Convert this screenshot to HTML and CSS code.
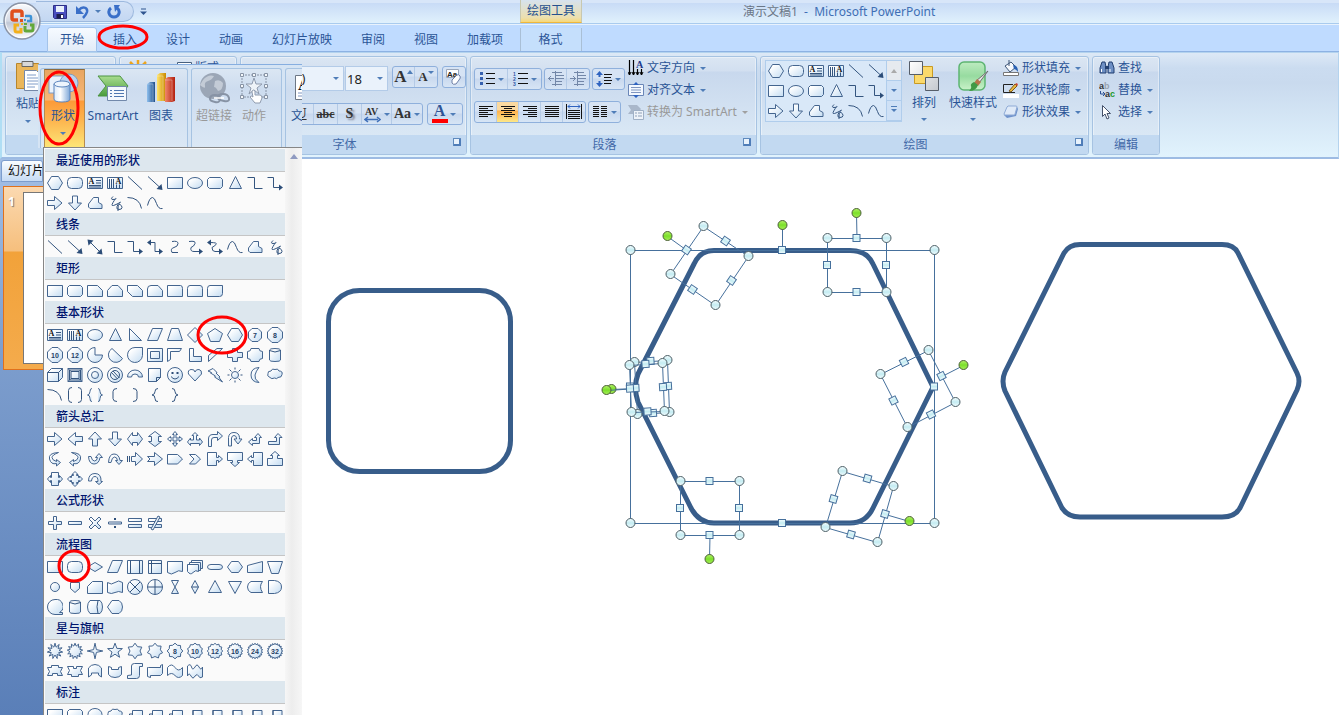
FILE: index.html
```html
<!DOCTYPE html>
<html lang="zh-CN">
<head>
<meta charset="utf-8">
<title>演示文稿1 - Microsoft PowerPoint</title>
<link rel="stylesheet" href="styles.css">
</head>
<body>
<svg class="defs" aria-hidden="true">
  <defs>
    <linearGradient id="gFill" x1="0" y1="0" x2="1" y2="1"><stop offset="0.2" stop-color="#fff"/><stop offset="1" stop-color="#c3dcf2"/></linearGradient>
    <linearGradient id="gKnob" x1="0" y1="0" x2="0" y2="1"><stop offset="0" stop-color="#f4fdff"/><stop offset="0.5" stop-color="#c4ecf2"/><stop offset="1" stop-color="#f0fbfd"/></linearGradient>
    <linearGradient id="gGreen" x1="0" y1="0" x2="0" y2="1"><stop offset="0" stop-color="#b4f06a"/><stop offset="0.5" stop-color="#7be02a"/><stop offset="1" stop-color="#a6ee58"/></linearGradient>
    <linearGradient id="gOrb" x1="0" y1="0" x2="0" y2="1"><stop offset="0" stop-color="#fbfcfe"/><stop offset="0.5" stop-color="#d3d9e4"/><stop offset="0.55" stop-color="#bfc7d5"/><stop offset="1" stop-color="#fff"/></linearGradient>
    <linearGradient id="gBlue" x1="0" y1="0" x2="1" y2="0"><stop offset="0" stop-color="#8fc0ee"/><stop offset="1" stop-color="#1f4f8c"/></linearGradient>
    <linearGradient id="gGold" x1="0" y1="0" x2="1" y2="0"><stop offset="0" stop-color="#ffe36b"/><stop offset="1" stop-color="#c98a00"/></linearGradient>
    <linearGradient id="gRed" x1="0" y1="0" x2="1" y2="0"><stop offset="0" stop-color="#f0876a"/><stop offset="1" stop-color="#b32010"/></linearGradient>
    <linearGradient id="gLeaf" x1="0" y1="0" x2="0" y2="1"><stop offset="0" stop-color="#a9dd8f"/><stop offset="1" stop-color="#4a9c3c"/></linearGradient>
    <linearGradient id="gCyl" x1="0" y1="0" x2="1" y2="0"><stop offset="0" stop-color="#dceafa"/><stop offset="0.4" stop-color="#fff"/><stop offset="1" stop-color="#7da6d8"/></linearGradient>
    <linearGradient id="gPlate" x1="0" y1="0" x2="1" y2="1"><stop offset="0" stop-color="#fff"/><stop offset="1" stop-color="#c4c8ce"/></linearGradient>
    <linearGradient id="gStyle" x1="0" y1="0" x2="0" y2="1"><stop offset="0" stop-color="#bdebc0"/><stop offset="0.5" stop-color="#97dba0"/><stop offset="1" stop-color="#c9f2c9"/></linearGradient>
  </defs>
</svg>

<header class="titlebar">
  <div class="quick">
    <button class="plain" aria-label="保存"><svg width="14" height="14" viewBox="0 0 14 14"><path d="M.5 .5h13v13h-12l-1-1z" fill="#4a4fc0" stroke="#2c2f86"/><path d="M3 1h8v6H3z" fill="#e8f0fb"/><path d="M3.500 9h7v4.500h-7z" fill="#1d1f4e"/><path d="M8 10h2v3H8z" fill="#fff"/></svg></button>
    <button class="plain" aria-label="撤消"><svg width="14" height="14" viewBox="0 0 14 14"><path d="M4 5c3-4 9-3 8 2-.5 2-2 4-4 6" fill="none" stroke="#3a6fc8" stroke-width="2.500"/><path d="M1 1v8h8z" fill="#3a6fc8"/></svg></button>
    <span class="caret"></span>
    <button class="plain" aria-label="重复"><svg width="14" height="14" viewBox="0 0 14 14"><path d="M4 3C0 6 2 12 7 12s7-6 3-9" fill="none" stroke="#3a6fc8" stroke-width="3"/><path d="M7 0h6l-5 7z" fill="#3a6fc8"/></svg></button>
  </div>
  <button class="plain customize" aria-label="自定义快速访问工具栏"><svg width="7" height="8" viewBox="0 0 7 8"><path d="M1 1h5" stroke="#2f558f"/><path d="M0 3.500h7L3.500 7z" fill="#2f558f"/></svg></button>
  <div class="context-title">绘图工具</div>
  <h1 class="doc-title"><span>演示文稿1</span>&nbsp; - &nbsp;Microsoft PowerPoint</h1>
</header>

<button class="orb" aria-label="Office 按钮">
  <svg width="40" height="40" viewBox="0 0 40 40">
    <circle cx="20" cy="20" r="18" fill="url(#gOrb)" stroke="#8a94a6" stroke-width="1.500"/>
    <circle cx="20" cy="20" r="16.500" fill="none" stroke="#fff" opacity=".8"/>
    <g fill="none" stroke-width="3">
      <path d="M16 19h-4q-2 0-2-2v-5q0-2 2-2h6q2 0 2 2v4" stroke="#e0501e" stroke-width="3.500"/>
      <path d="M23 15h5q1 0 1 1v4h-4" stroke="#3f93d6" stroke-width="2.500"/>
      <path d="M17 24h-4v5q0 2 2 2h4v-4" stroke="#f3b01c"/>
      <path d="M23 25v4q0 1 1 1h5q2 0 2-2v-4h-3" stroke="#63a83a"/>
    </g>
    <path d="M18 18h3v3h-3z" fill="#e0501e"/><path d="M22 18h2v2h-2z" fill="#3f93d6"/><path d="M19 22h2v2h-2z" fill="#f3b01c"/><path d="M22 22h3v2h-3z" fill="#63a83a"/>
  </svg>
</button>

<nav class="tabs">
  <button class="tab active">开始</button><button class="tab">插入</button><button class="tab">设计</button><button class="tab">动画</button><button class="tab">幻灯片放映</button><button class="tab">审阅</button><button class="tab">视图</button><button class="tab">加载项</button><button class="tab context">格式</button>
</nav>

<section class="ribbon">
  <div class="group g-clip">
    <div class="body">
      <button class="big paste"><svg width="26" height="32" viewBox="0 0 26 32"><path d="M1.500 3.500h22v25h-22z" fill="#eab65a" stroke="#b8862c"/><path d="M7 1.500h11v5H7z" fill="#d8d8d8" stroke="#666"/><path d="M9.500 10.500h12l4 4v16h-16z" fill="#fff" stroke="#7488a8"/><path d="M12 15h9M12 18h11M12 21h11M12 24h11M12 27h8" stroke="#7f9cc8"/></svg>粘贴<span class="caret"></span></button>
      <button class="row cut"><svg width="12" height="14" viewBox="0 0 12 14"><path d="M2 1l6 9M10 1L4 10" stroke="#555" stroke-width="1.500"/></svg>剪切</button>
    </div>
    <div class="label">剪贴板</div>
  </div>
  <div class="group g-slides">
    <div class="body">
      <svg width="26" height="26" viewBox="0 0 26 26"><path d="M13 3v12M5 5l8 8 8-8" stroke="#eda51c" stroke-width="2.500" fill="none"/></svg>
      <button class="row"><svg width="15" height="14" viewBox="0 0 15 14"><path d="M.5 1.500h14v12H.5z" fill="#fff" stroke="#47607e"/><path d="M3 4h9" stroke="#47607e"/></svg>版式</button>
    </div>
    <div class="label">幻灯片</div>
  </div>
  <div class="group g-font">
    <div class="body rows">
      <div class="line">
        <div class="combo name"><input aria-label="字体" value="宋体 (正文)"><span class="caret"></span></div>
        <div class="combo size"><input aria-label="字号" value="18"><span class="caret"></span></div>
        <div class="btns"><button class="serif s16" aria-label="增大字体">A<i class="tri up"></i></button><button class="serif s13" aria-label="缩小字体">A<i class="tri"></i></button></div>
        <div class="btns"><button aria-label="清除格式"><svg width="18" height="18" viewBox="0 0 18 18"><path d="M1.500 1.500h12v8h-12z" fill="#fff" stroke="#9aa6ba"/><text x="2" y="9" class="t-aa">Aa</text><path d="M7 12l5-5q2-1 3 1t-1 4l-3 4q-3 1-4-1z" fill="#fff" stroke="#6d7fa6"/></svg></button></div>
      </div>
      <div class="line">
        <div class="btns fmt"><button class="serif">B</button><button class="serif"><i>I</i></button><button class="serif"><u>U</u></button><button class="serif strike">abc</button><button class="serif shadow">S</button><button class="serif av"><svg width="17" height="17" viewBox="0 0 17 17"><text x="1" y="9" class="t-av">AV</text><path d="M2 13.500h12M4 11l-3 2.500L4 16M13 11l3 2.500-3 2.500" fill="none" stroke="#3f6fb8" stroke-width="1.500"/></svg><span class="caret"></span></button><button class="serif">Aa<span class="caret"></span></button></div>
        <div class="btns"><button class="serif color">A<span class="caret"></span></button></div>
      </div>
    </div>
    <div class="label launch">字体<i class="launcher"></i></div>
  </div>
  <div class="group g-para">
    <div class="body">
      <div class="rows">
        <div class="line">
          <div class="btns w34"><button aria-label="项目符号" data-icon="bullets"></button><button aria-label="编号" data-icon="numbers"></button></div>
          <div class="btns w22 off"><button aria-label="减少缩进" data-icon="outdent"></button><button aria-label="增加缩进" data-icon="indent"></button></div>
          <div class="btns w32"><button aria-label="行距" data-icon="spacing"></button></div>
        </div>
        <div class="line">
          <div class="btns w23"><button aria-label="左对齐" data-icon="aleft"></button><button class="on" aria-label="居中" data-icon="acenter"></button><button aria-label="右对齐" data-icon="aright"></button><button aria-label="两端对齐" data-icon="ajust"></button><button aria-label="分散对齐" data-icon="adist"></button></div>
          <div class="btns w32"><button aria-label="分栏" data-icon="columns"></button></div>
        </div>
      </div>
      <div class="stack">
        <button class="row"><svg width="16" height="16" viewBox="0 0 16 16"><path d="M1.500 0v15M5.500 0v15M9.500 9v6M13.500 9v6" stroke="#000" stroke-width="1.200"/><path d="M0 12l1.500 3L3 12M4 12l1.500 3L7 12M8 12l1.500 3 1.500-3M12 12l1.500 3 1.500-3" fill="none" stroke="#000"/><text x="8" y="8" class="t-a">A</text></svg>文字方向<span class="caret"></span></button>
        <button class="row"><svg width="16" height="16" viewBox="0 0 16 16"><path d="M.5 2.500h15v11H.5z" fill="#f3f8ff" stroke="#6a86b8"/><path d="M3 5.500h10M3 8h10M3 10.500h10" stroke="#7f95bf"/><path d="M8 0l3 3H5zM8 16l3-3H5z" fill="#2f63c0"/></svg>对齐文本<span class="caret"></span></button>
        <button class="row off" disabled><svg width="16" height="16" viewBox="0 0 16 16"><path d="M0 1h9l4 4-4 5H0l3-4z" fill="#a9b7ca"/><path d="M5.500 6.500h10v9h-10z" fill="#eef3f9" stroke="#9fb0c6"/><path d="M7 9h2M10 9h4M7 12h2M10 12h4" stroke="#8fa0b8"/></svg>转换为 SmartArt<span class="caret"></span></button>
      </div>
    </div>
    <div class="label launch">段落<i class="launcher"></i></div>
  </div>
  <div class="group g-draw">
    <div class="body">
      <div class="mini">
        <div class="shapes" data-list="hex rrect textbox vtext line arrow rect oval rrect2 tri elbow elbowA rArr dArr freeform scribble arc curve"></div>
        <div class="spin"><button class="dim" aria-label="上一行"><i class="tri up"></i></button><button aria-label="下一行"><i class="tri"></i></button><button aria-label="其他"><i class="tri bar"></i></button></div>
      </div>
      <button class="big arrange"><svg width="32" height="32" viewBox="0 0 32 32"><path d="M6.500 6.500h18v17h-18z" fill="#fbd96b" stroke="#c99a22"/><path d="M1.500 1.500h13v13h-13zM17.500 17.500h13v13h-13z" fill="url(#gPlate)" stroke="#555d69"/></svg>排列<span class="caret"></span></button>
      <button class="big"><svg width="32" height="32" viewBox="0 0 32 32"><rect x="2" y="2" width="26" height="28" rx="5" fill="url(#gStyle)" stroke="#5db472" stroke-width="1.500"/><path d="M31 11l-9 12-3-2z" fill="#e6e6e6" stroke="#6f6f6f"/><path d="M20 19l4 3-3 4-4-3z" fill="#b3754b"/><path d="M17 22l4 3q-2 6-9 6 3-3 2-5t3-4z" fill="#3f9a45"/></svg>快速样式<span class="caret"></span></button>
      <div class="stack">
        <button class="row"><svg width="16" height="16" viewBox="0 0 16 16"><path d="M2 6l6-4 5 5-6 5z" fill="#f6f9fd" stroke="#3e5678"/><path d="M6 0v6" stroke="#3e5678"/><path d="M10 5q5 0 5 7-2-3-4-3z" fill="#2b62b4"/><path d="M.5 12.500h15v3H.5z" fill="#fff" stroke="#777"/></svg>形状填充<span class="caret"></span></button>
        <button class="row"><svg width="16" height="16" viewBox="0 0 16 16"><path d="M12 10.500H.5v-8H10" fill="none" stroke="#222"/><path d="M6 9l6-7 2 2-6 6z" fill="#e9b83e" stroke="#7d5b1d"/><path d="M12 2l2-1 1 2-1 1z" fill="#cc4432"/><path d="M0 12h16v4H0z" fill="#fff"/></svg>形状轮廓<span class="caret"></span></button>
        <button class="row"><svg width="16" height="16" viewBox="0 0 16 16"><path d="M5 3h9l1 2-2 7-9 2-3-3z" fill="#6f93cc"/><path d="M5 2h8q1 0 1 1l-2 7q0 1-1 1H2q-1 0-1-1l3-7z" fill="#dfeaf8" stroke="#8fabd6"/></svg>形状效果<span class="caret"></span></button>
      </div>
    </div>
    <div class="label launch">绘图<i class="launcher"></i></div>
  </div>
  <div class="group g-edit">
    <div class="body">
      <div class="stack">
        <button class="row"><svg width="16" height="16" viewBox="0 0 16 16"><path d="M3 2h3l1 5v6H1V8zM10 2h3l2 6v5H9V7z" fill="#6d8fc4" stroke="#223f70"/><path d="M6 6h4v3H6z" fill="#223f70"/><path d="M2.500 9v3M11 9v3" stroke="#fff"/></svg>查找</button>
        <button class="row"><svg width="16" height="16" viewBox="0 0 16 16"><text x="0" y="7" class="t-ab">a<tspan fill="#9aa3b0">b</tspan></text><text x="6" y="15" class="t-ab">a<tspan fill="#1f9a2c">c</tspan></text><path d="M1.500 9v3h4M4 10l2 2-2 2" fill="none" stroke="#2a4f93"/></svg>替换<span class="caret"></span></button>
        <button class="row"><svg width="16" height="16" viewBox="0 0 16 16"><path d="M3.500 1.500v11l2.500-2.500 2 5 2-1-2-4.500h3.500z" fill="#fff" stroke="#44516a"/></svg>选择<span class="caret"></span></button>
      </div>
    </div>
    <div class="label">编辑</div>
  </div>
</section>

<main class="workspace">
  <aside class="pane">
    <div class="pane-tab">幻灯片</div>
    <div class="thumb"><span>1</span><div class="slide"></div></div>
  </aside>
  <svg class="stage" id="stage"></svg>
</main>

<section class="insert">
  <div class="igroup first">
    <button class="big hot"><svg width="32" height="32" viewBox="0 0 32 32"><rect x="2" y="4" width="17" height="17" fill="#eaf2fc" stroke="#7e9cc8"/><circle cx="22" cy="11" r="9" fill="#bcd3f0" stroke="#7e9cc8"/><path d="M7 12v15q0 3 8 3t8-3V12z" fill="url(#gCyl)" stroke="#5b84bd"/><ellipse cx="15" cy="12" rx="8" ry="3" fill="#eef5fd" stroke="#5b84bd"/></svg>形状<span class="caret"></span></button>
    <button class="big smart"><svg width="32" height="32" viewBox="0 0 32 32"><path d="M1 4h22l8 10-8 10H1l8-10z" fill="url(#gLeaf)" stroke="#4d9443"/><path d="M10.500 14.500h19v14h-19z" fill="#f4f8fd" stroke="#7289ab"/><path d="M13 18.500h2M17 18.500h10M13 21.500h2M17 21.500h10M13 24.500h2M17 24.500h10" stroke="#4f77b0"/></svg>SmartArt</button>
    <button class="big"><svg width="32" height="32" viewBox="0 0 32 32"><path d="M2 12l3-2h5v20H2z" fill="url(#gBlue)"/><path d="M12 3l3-2h6v28h-9z" fill="url(#gGold)"/><path d="M20 7l3-2h7v24l-3 1h-7z" fill="url(#gRed)"/><path d="M2 12h6v18M12 4h6v25M20 8h7v21" fill="none" stroke="#fff" opacity=".3"/></svg>图表</button>
  </div>
  <div class="igroup off second">
    <button class="big" disabled><svg width="32" height="32" viewBox="0 0 32 32"><circle cx="15" cy="14" r="13" fill="#9ba6b6"/><path d="M5 8q5-6 11-4-2 4-6 5t-3 5-5-1zM17 9q5-2 8 2 0 7-5 8-2-4-4-4z" fill="#c3cbd6"/><path d="M12 27q0-4 5-4t5 4-5 3-5-3zM20 26q0-4 5-4t6 4-5 3-6-3z" fill="none" stroke="#8793a5" stroke-width="2"/><path d="M16 26h10" stroke="#fff" stroke-width="1.500"/></svg>超链接</button>
    <button class="big" disabled><svg width="32" height="32" viewBox="0 0 32 32"><path d="M4 3h24v22H4z" fill="none" stroke="#8793a5" stroke-dasharray="2 1"/><path d="M16 6l2 6h6l-5 4 2 6-5-4-5 4 2-6-5-4h6z" fill="#eef3f8" stroke="#8f9bae"/><path d="M2.500 1.500h3v3h-3zM14.500 1.500h3v3h-3zM26.500 1.500h3v3h-3zM2.500 12.500h3v3h-3zM26.500 12.500h3v3h-3zM2.500 23.500h3v3h-3zM26.500 23.500h3v3h-3z" fill="#f4f7fa" stroke="#8793a5"/><path d="M14 20v-1q2-2 3 0v4h5q2 0 2 3l-2 5h-5l-5-6q1-2 3 0z" fill="#fff" stroke="#8f9bae"/></svg>动作</button>
  </div>
  <div class="igroup third">
    <button class="big"><svg width="32" height="32" viewBox="0 0 32 32"><path d="M2.500 3.500h28v24h-28z" fill="#fff" stroke="#6d7785"/><text x="5" y="18" class="t-box">A</text><path d="M5 21h20M5 24h20" stroke="#7f95bf"/></svg>文本框</button>
  </div>
</section>

<section class="menu">
  <div class="menu-list" id="menu"></div>
  <div class="scroll"><i class="tri up"></i></div>
</section>

<svg class="marks" aria-hidden="true">
  <ellipse cx="123" cy="37" rx="24" ry="11"/>
  <ellipse cx="59" cy="108" rx="19" ry="36"/>
  <ellipse cx="222" cy="335" rx="24" ry="18"/>
  <circle cx="74" cy="566" r="15"/>
</svg>
<script src="script.js"></script>
</body>
</html>
```
FILE: styles.css
```css
* { box-sizing: border-box; }
html, body { height: 100%; }
body {
  margin: 0; display: flex; flex-direction: column; overflow: hidden; position: relative;
  font: 12px/16px "Noto Sans", "Noto Sans CJK SC", sans-serif; color: #2a5496; background: #bfdbff;
}
button { font: inherit; color: inherit; background: none; border: 0; padding: 0; margin: 0; white-space: nowrap; }
svg { display: block; flex: none; }
.defs { position: absolute; width: 0; height: 0; }
.plain { display: flex; align-items: center; }

.caret, .tri { display: block; flex: none; width: 0; height: 0; border: 3px solid transparent; border-top-color: #4f7db8; border-bottom: 0; }
.tri.up { border-top: 0; border-bottom: 4px solid #4f7db8; }
.off .caret { border-top-color: #a0a0a0; }

.titlebar {
  flex: none; height: 24px; display: flex; align-items: stretch; padding-left: 36px;
  background: linear-gradient(#d8e6f9 0 3px, #c8dbf6 3px, #dff0fc 22px); border-bottom: 1px solid #a9cbee;
}
.quick {
  display: flex; align-items: center; gap: 8px; width: 98px; padding-left: 17px; margin: 1px 0 1px;
  background: linear-gradient(#d3e2f6, #c3d7f2); border: 1px solid #9db9de; border-left: 0; border-radius: 0 11px 11px 0;
}
.quick .caret { margin: 0 -2px; }
.customize { margin-left: 6px; }
.context-title {
  margin-left: 373px; width: 62px; text-align: center; line-height: 22px; color: #25508f;
  background: linear-gradient(#d6e2ee, #ecdfae 80%, #f7d878); border: solid #c8c8b0; border-width: 0 1px; border-bottom: 1px solid #efb73c;
}
.doc-title { margin: 0 0 0 161px; font-size: 12px; font-weight: 400; line-height: 24px; color: #3f6fb5; white-space: nowrap; }
.doc-title span { color: #6b7787; }

.orb { position: absolute; left: 2px; top: 1px; z-index: 3; border-radius: 50%; }

.tabs { flex: none; height: 28px; display: flex; align-items: stretch; gap: 5px; padding: 3px 0 0 48px; border-top: 1px solid #e8f2fd; background: #bfdbff; border-bottom: 1px solid #8db2e3; }
.tab { padding: 0 12px; line-height: 22px; }
.tab.active { background: linear-gradient(#f6faff, #e2ecf8); border-radius: 3px 3px 0 0; box-shadow: 0 0 0 1px #a3c3ea, 0 1px 0 1px #e2ecf8; }
.tab.context { width: 62px; padding: 0 11px 0 10px; border: solid #a9bfd6; border-width: 0 1px; background: #c5dffc; }

.ribbon {
  flex: none; display: flex; gap: 3px; padding: 3px 5px 2px 3px; height: 107px;
  background: linear-gradient(#dde9f6, #cbdcf0 15px, #c9daee 30px, #e1f3fd); border: 1px solid #b4d3ee; border-left: 2px solid #b0def4; border-bottom: 2px solid #9dbbe3;
}
.group {
  flex: none; display: flex; flex-direction: column; border: 1px solid #a6c3e2; border-radius: 3px; overflow: hidden; box-shadow: inset 0 0 0 1px rgba(255,255,255,.4);
  background: linear-gradient(#dbe6f3, #d2dff0 14px, #c8d8ed 15px, #dae8f5 80px);
}
.body { flex: 1; min-height: 0; display: flex; align-items: flex-start; }
.label { flex: none; height: 19px; line-height: 19px; text-align: center; background: #c2d9f1; color: #4369a8; }
.label.launch { display: flex; align-items: center; justify-content: center; position: relative; padding-right: 18px; }
.launcher { position: absolute; right: 5px; top: 3px; width: 8px; height: 8px; border: solid #5f8abd; border-width: 1px 0 0 1px; }
.launcher::after { content: ""; position: absolute; right: 0; bottom: 0; width: 5px; height: 5px; border: solid #4f7db8; border-width: 0 2px 2px 0; background: #e8f2fc; }
.g-clip { width: 111px; }
.g-slides { width: 118px; }
.g-font { width: 227px; }
.g-para { width: 287px; }
.g-draw { width: 329px; }
.g-edit { width: 68px; }

.big { display: flex; flex-direction: column; align-items: center; }
.big .caret { margin-top: 8px; }
.big svg { margin-bottom: 4px; }
.row { display: flex; align-items: center; gap: 3px; height: 22px; }
.row .caret { margin-left: 2px; }
.off, .off button { color: #999; }

.g-clip .body { padding: 3px 9px; gap: 18px; }
.g-clip .big svg { margin-bottom: 4px; }
.g-clip .row { gap: 6px; }
.g-slides .body { padding: 0 5px; gap: 26px; }

.rows { display: flex; flex-direction: column; gap: 13px; }
.line { display: flex; gap: 4px; }
.g-font .rows { padding: 9px 4px 0; gap: 12px; }
.combo { display: flex; align-items: center; height: 25px; background: #eaf2fb; border: 1px solid #b3cbe8; padding-right: 4px; }
.combo input { min-width: 0; flex: 1; border: 0; padding: 0 0 0 1px; background: none; font: inherit; color: #222; }
.combo.name { width: 99px; margin-right: -3px; }
.combo.size { width: 43px; font-size: 13px; }
.btns { display: flex; height: 22px; border: 1px solid #8fb0dc; border-radius: 3px; background: linear-gradient(#d6e3f4 45%, #c8d8ee 50%, #d7e5f5); }
.btns button { display: flex; align-items: center; justify-content: center; gap: 3px; min-width: 22px; border-right: 1px solid #b4cae6; }
.btns button:last-child { border-right: 0; }
.serif { font-family: "Liberation Serif", serif; font-weight: 700; color: #333; font-size: 14px; }
.serif.s16 { font-size: 17px; }
.serif.s13 { font-size: 13px; }
.btns .s16, .btns .s13 { gap: 0; }
.s16 .tri, .s13 .tri { margin-bottom: 10px; }
.fmt button:nth-child(n+3) { min-width: 24px; }
.fmt button:nth-child(n+6) { min-width: 30px; }
.serif.strike { text-decoration: line-through; font-size: 12px; }
.shadow { text-shadow: 2px 2px 2px #778; }
.btns .color { width: 34px; font-size: 16px; color: #2f5496; line-height: 14px; align-items: flex-start; background: linear-gradient(#f00, #f00) 4px 15px / 16px 4px no-repeat; }
.btns .color .caret { margin-top: 9px; margin-left: 2px; }

.g-para .body { padding: 0 3px; gap: 3px; }
.g-para .rows { padding-top: 11px; gap: 11px; }
.g-para .line { gap: 2px; }
.w34 button { width: 33px; }
.w32 button { width: 31px; }
.btns .on { background: linear-gradient(#fbd9a0 40%, #fdb14e 45%, #fde788); }
.stack { display: flex; flex-direction: column; }

.g-draw .body { padding: 3px 4px; }
.mini { display: flex; border: 1px solid #b0cdec; background: #d9e8f8; margin-right: 6px; }
.shapes { display: grid; grid-template-columns: repeat(12, 20px); grid-auto-rows: 20px; }
.cell { display: flex; align-items: center; justify-content: center; }
.mini .shapes { grid-template-columns: repeat(6, 20px); }
.mini .cell { width: 20px; height: 20px; }
.spin { display: flex; flex-direction: column; width: 15px; border-left: 1px solid #b0cdec; }
.spin button { flex: 1; display: flex; align-items: center; justify-content: center; border-bottom: 1px solid #b0cdec; background: #cfe1f6; }
.spin .dim { background: #e6eaef; }
.spin .dim .tri { border-bottom-color: #aaa; }
.tri.bar { position: relative; }
.tri.bar::before { content: ""; position: absolute; left: -3px; top: -6px; width: 6px; height: 1px; background: #4f7db8; }
.g-draw .arrange { margin-right: 9px; }
.g-draw .big .caret { margin-top: 7px; }
.g-draw .big svg { margin-bottom: 3px; }
.g-draw .body > .stack { margin: -3px 0 0 6px; }
.g-edit .body { padding-left: 6px; }

.workspace { flex: 1; min-height: 0; display: flex; }
.pane { flex: none; width: 43px; padding: 1px 0 0 1px; background: linear-gradient(#a3bfe5, #7c9dcd 200px, #5a7fb8); }
.pane-tab { width: 42px; height: 22px; padding-left: 6px; overflow: hidden; white-space: nowrap; line-height: 20px; color: #111; background: linear-gradient(#fafdff, #c6dbf4); border: 1px solid #7c9dcd; border-radius: 3px 3px 0 0; }
.thumb { margin: 4px 0 0 2px; height: 184px; display: flex; align-items: flex-start; gap: 8px; padding: 5px 0 5px 4px; border: 1px solid #e0711c; border-right: 0; background: linear-gradient(#fbd9b0, #f6bf7d 64px, #f2a23a 65px, #f4ab4c); overflow: hidden; }
.thumb span { color: #fff; font-weight: 700; line-height: 20px; text-shadow: 1px 1px 1px #777; }
.slide { flex: 1; height: 172px; background: #fff; border: 1px solid #777; border-right: 0; }
.stage { flex: 1; width: 100%; height: 100%; background: #fff; }
.outline { fill: none; stroke: #385d8a; stroke-width: 5; stroke-linejoin: round; }
.guide { fill: none; stroke: #46709c; stroke-width: 1; }
.knob { fill: url(#gKnob); stroke: #4d5f66; }
.mid { fill: url(#gKnob); stroke: #46709c; }
.green { fill: url(#gGreen); stroke: #4d5f3a; }

.insert { position: absolute; left: 38px; top: 64px; z-index: 5; width: 264px; height: 84px; display: flex; gap: 3px; padding: 3px 0 0 2px; overflow: hidden; background: #d5e4f4; border-top: 1px solid #86aee0; }
.igroup { flex: none; display: flex; align-items: flex-start; border: 1px solid #a6c3e2; border-bottom: 0; border-radius: 3px 3px 0 0; background: linear-gradient(#dbe6f3, #cddcef 20px, #dbe8f5); }
.igroup.off { color: #999; }
.igroup .big { padding-top: 3px; }
.first { width: 148px; padding-left: 3px; gap: 2px; }
.second { width: 91px; padding-left: 4px; gap: 6px; }
.third { width: 50px; padding-left: 5px; }
.igroup .hot { width: 41px; height: 79px; padding: 2px 3px 0 0; border: 1px solid #b58b50; border-top-color: #8d6a3c; background: linear-gradient(#e8a560, #f7b878 30px, #fc9a38 31px, #fdb44e 50px, #fde576); }
.smart { min-width: 52px; }
.igroup .big:nth-child(3) { margin-left: 4px; }

.menu { position: absolute; left: 43px; top: 147px; bottom: 0; z-index: 6; width: 259px; display: flex; overflow: hidden; background: #fafafa; border: 1px solid #868686; border-width: 1px 0 0 1px; }
.menu-list { flex: none; width: 241px; padding: 1px 0 0 1px; overflow: hidden; }
.menu h2 { margin: 0; height: 23px; padding-left: 11px; font-size: 12px; line-height: 23px; font-weight: 500; color: #00156e; background: #dde7ee; border-bottom: 1px solid #c5c5c5; }
.menu .shapes { padding-top: 1px; }
.scroll { flex: 1; padding: 6px 0 0 5px; background: linear-gradient(90deg, #f6f6f6, #ededed 40%, #f6f6f6); }
.scroll .tri { border-width: 0 4px 5px; border-bottom-color: #8f9ac0; }

.f { fill: url(#gFill); stroke: #44658f; }
.l { fill: none; stroke: #34557f; }
.d { fill: #2c4d78; stroke: none; }
.k { fill: none; stroke: #111; stroke-width: 1; }
.tn { font: 700 7px/8px "Liberation Sans", sans-serif; text-anchor: middle; fill: #1f3f66; }
.ta { font: 700 8px "Liberation Serif", serif; fill: #111; }
.tb { font: 700 5px "Liberation Sans", sans-serif; fill: #2f55a8; }
.t-aa { font: 700 8px "Liberation Sans", sans-serif; fill: #222; }
.t-av { font: 700 10px "Liberation Serif", serif; fill: #333; }
.t-a { font: 700 10px "Liberation Serif", serif; fill: #1d3a8a; }
.t-ab { font: 700 9px "Liberation Sans", sans-serif; fill: #333; }
.t-box { font: 700 16px "Liberation Serif", serif; fill: #111; }

.marks { position: absolute; left: 0; top: 0; width: 100%; height: 100%; z-index: 10; pointer-events: none; }
.marks * { fill: none; stroke: #f00; stroke-width: 3; }
```
FILE: script.js
```javascript
// Shape glyphs on a 16x16 grid. Parts are split by "|"; the first letter picks
// the style: F filled outline, L thin line, D solid dark, T centred number.
const G = {
  hex: 'FM4.5 1.5h7l4 6.500-4 6.500h-7L.5 8z',
  rrect: 'FM4.5 2.500h7q4 0 4 4v3q0 4-4 4h-7q-4 0-4-4v-3q0-4 4-4z',
  rrect2: 'FM2.500 2.500h11l2 2v7l-2 2h-11l-2-2v-7z',
  textbox: 'FM.5 2.500h15v11H.5z|LM9 5.500h5M9 8h5M2 10.500h12M2 12h12|A1.500,9',
  vtext: 'FM.5 2.500h15v11H.5z|LM2.500 4v9M4.500 4v9M6.500 4v9M9.500 9.500v4M12.500 9.500v4|A8.500,9',
  line: 'LM1 1.500L15 14.500', arrow: 'LM1 1.500L13 12.500|DM15.500 15l-6-1 5-5z',
  darrow: 'LM3 3l10 10|DM15.500 15.500l-6-1 5-5zM.5 .5l6 1-5 5z',
  rect: 'FM.5 2.500h15v11H.5z', oval: 'FM8 2.500a7.500 5.500 0 1 1 0 11a7.500 5.500 0 1 1 0-11z',
  tri: 'FM8.500 1.500l6 12h-12z', elbow: 'LM.5 2.500h7v11h8',
  elbowA: 'LM.5 2.500h6v10h7|DM12 9.500l4 3-4 3z', elbowD: 'LM3 3.500h5v9h5|DM4 .5l-4 3 4 3zM12 9.500l4 3-4 3z',
  curved: 'LM5 2.500q6-1 6 2t-4 4-2 5h6', curvedA: 'LM2 2.500q7-1 6 2t-4 4q-1 4 3 4h6|DM12 9.500l4 3-4 3z',
  curvedD: 'LM3 3.500q8 0 6 2t-4 3q0 4 3 4h5|DM4 .5l-4 3 4 3zM12 9.500l4 3-4 3z',
  rArr: 'FM.5 5.500h7v-4L15 8l-7.500 6.500v-4h-7z', lArr: 'FM15.500 5.500h-7v-4L1 8l7.500 6.500v-4h7z',
  uArr: 'FM5.500 15v-7h-4L8 1l6.500 7h-4v7z', dArr: 'FM5.500 1v7h-4L8 15l6.500-7h-4V1z',
  freeform: 'FM1.500 12V9l5-6.500h5v5l3.500 2v4H3z', scribble: 'LM6 1.500q-3 3 0 3t3-1-3 4 3 2 4-2-3 4 2 3 3-2-2-3-2 5 0 3',
  arc: 'LM.5 2.500q12 0 14 11', curve: 'LM.5 10.500q2-8 5-8 2 0 4 6t6 5',
  snip1: 'FM.5 2.500h10l5 5v6H.5z', snip2: 'FM5 2.500h6l4.500 5v6H.5v-6z', snipd: 'FM.5 2.500h10l5 5v6h-10l-5-5z',
  snipr: 'FM4 2.500h7l4.500 5v6H.5V6q0-3.500 3.500-3.500z', round1: 'FM.5 2.500h13q2 0 2 3v8H.5z',
  round2: 'FM3 2.500h10q2.500 0 2.500 3v8H.5v-8q0-3 2.500-3z', roundd: 'FM3 2.500h12.500v8q0 3-3 3H.5v-8q0-3 2.500-3z',
  rtri: 'FM2.500 1.500l12 12h-12z', para: 'FM5.500 1.500h10l-5 12H.5z', trap: 'FM4.500 1.500h7l4 12H.5z',
  diamond: 'FM8 .5L15.500 8 8 15.500.5 8z', pentagon: 'FM8 1.500l7.500 5-3 8h-9l-3-8z',
  n7: 'FM5 1.500h6l3.500 3.500v6L11 14.500H5L1.500 11V5z|T7', n8: 'FM5 .5h6l4.500 4.500v6L11 15.500H5L.5 11V5z|T8',
  n10: 'FM5 .5h6l4.500 4.500v6L11 15.500H5L.5 11V5z|T10', n12: 'FM5 .5h6l4.500 4.500v6L11 15.500H5L.5 11V5z|T12',
  pie: 'FM8 8h7.500A7.500 7.500 0 1 1 8 .5z', chord: 'FM5 1.500l10.500 10a7.500 7.500 0 1 1-10.500-10z', tear: 'FM15.500 .5v8A7.500 7.500 0 1 1 8 .5z',
  frame: 'FM.5 1.500h15v13H.5zM3.500 4.500h9v7h-9z', half: 'FM.5 1.500h14l-2 3h-9v8l-3 2z', lshape: 'FM2.500 1.500h4v8h8v5h-12z',
  stripe: 'FM10 1.500h5.500L1.500 14.500v-6z', cross: 'FM5.500 1.500h5v4h5v5h-5v4h-5v-4h-5v-5h5z', plaque: 'FM4 1.500h8q0 3 3.500 3v7q-3.500 0-3.500 3H4q0-3-3.500-3v-7q3.500 0 3.500-3z',
  can: 'FM2.500 3q0-1.500 5.500-1.500T13.500 3v10q0 1.500-5.500 1.500T2.500 13z|LM2.500 3.500Q8 6.500 13.500 3.500',
  cube: 'FM.5 5.500l4-4h11v9l-4 4H.5z|LM.5 5.500h11v9M11.500 5.500l4-4', bevel: 'FM1 1.500h14v13H1z|LM4 4.500h8v7H4zM1 1.500l3 3M15 1.500l-3 3M1 14.500l3-3M15 14.500l-3-3M2.500 3v10h11V3z',
  donut: 'FM8 .5a7.500 7.500 0 1 1 0 15a7.500 7.500 0 1 1 0-15z|FM8 4.500a3.500 3.500 0 1 1 0 7a3.500 3.500 0 1 1 0-7z', no: 'FM8 .5a7.500 7.500 0 1 1 0 15a7.500 7.500 0 1 1 0-15z|LM8 3.500a4.500 4.500 0 1 1 0 9a4.500 4.500 0 1 1 0-9zM4 5l6.500 7M6 4l6.500 7',
  blocka: 'FM.5 10a7.500 7 0 0 1 15 0h-4a3.500 3 0 0 0-7 0z', fold: 'FM1.500 1.500h12v9l-4 4h-8z|LM9.500 14.500v-4h4',
  smile: 'FM8 .5a7.500 7.500 0 1 1 0 15a7.500 7.500 0 1 1 0-15z|LM4 9.500q4 5 8 0|DM4.500 5h2v2h-2zM9.500 5h2v2h-2z',
  heart: 'FM8 14L1.500 7Q.5 3 4 2.500T8 5q1-3 4-2.500t2.500 4.500z', bolt: 'FM1 4l5-2.500 4 4-1 .5 4 4-1 .5 3.500 4.500-8-5 1-1-5-3 1-.5z',
  sun: 'FM8 4.500a3.500 3.500 0 1 1 0 7a3.500 3.500 0 1 1 0-7z|LM8 .5v2M8 13.500v2M.5 8h2M13.500 8h2M2.500 2.500l2 2M11.500 11.500l2 2M2.500 13.500l2-2M11.500 4.500l2-2',
  moon: 'FM12 .5Q4 1 4 8t8 7.500Q7 12 8 8t4-7.500z', cloud: 'FM3 10.500Q-.5 9 1 6.500 .5 4 4 4q1-3 4-1.500 3-1.500 4 1.500 4 0 3 3.500 0 3-4 3-1 2-3.500 .5-3 1.500-4.500-.5z',
  bracketp: 'LM5 .5q-3.500 0-3.500 3v9q0 3 3.500 3M11 .5q3.500 0 3.500 3v9q0 3-3.500 3', bracep: 'FM5 1.500q-2 0-2 3t-2.500 3.500Q3 8 3 11.500t2 3M11 1.500q2 0 2 3t2.500 3.500Q13 8 13 11.500t-2 3',
  lbk: 'LM10 1.500q-4 0-4 3v7q0 3 4 3', rbk: 'LM6 1.500q4 0 4 3v7q0 3-4 3', lbc: 'LM11 1.500q-3 0-3 3T5 8q3 0 3 3.500t3 3', rbc: 'LM5 1.500q3 0 3 3T11 8q-3 0-3 3.500t-3 3',
  lr: 'FM.5 8l5-6.500v3h5v-3l5 6.500-5 6.500v-3h-5v3z', ud: 'FM8 .5l6.500 5h-3v5h3l-6.500 5-6.500-5h3v-5h-3z',
  quad: 'FM8 .5l2.500 3H9v3.500h3.500V5.500l3 2.500-3 2.500V9H9v3.500h1.500L8 15.500l-2.500-3H7V9H3.500v1.500L.5 8l3-2.500V7H7V3.500H5.500z', lru: 'FM8 1.500l3 3H9.500V9h3V7l3 4-3 3.500v-2h-9v2L.5 11l3-4v2h3V4.500H5z',
  bent: 'FM1.500 15.500V8Q1.500 3.500 6 3.500h4.500v-3l5 4.500-5 4.500v-3H7Q4.500 6.500 4.500 9v6.500z', uturn: 'FM1.500 15V6.500Q2 1.500 7 1.500t5.500 5V8h2.500l-4 5-4-5h2.500V7Q9 4.500 7 4.500T4.500 7v8z',
  leftup: 'FM11 2.500l3.500 4h-2v6h-7v2L1.500 11l4-3.500v2H9.500v-3h-2z', bentup: 'FM11 2.500l4 4h-2.500v7H1.500v-3h8v-4h-2z',
  cr: 'FM11.500 1.500Q1 2 2.500 8t7 4.500v2.500l4-3.500-4-3v2Q5 9 5 6.500t6.500-5z', cl: 'FM4.500 1.500Q15 2 13.500 8t-7 4.500v2.500l-4-3.500 4-3v2Q11 9 11 6.500t-6.500-5z',
  cu: 'FM1.500 5.500Q2 13 7 13t6-6.500h2.500L12 2.500 8.500 6.500h2Q10 10 7.500 10T4 5.500z', cd: 'FM1.500 11.500Q2 3 7 3t6 6.500h2.500L12 13.500 8.500 9.500h2Q10 6 7.500 6T4 11.500z',
  striped: 'LM.5 5v6M2.500 5v6|FM4.500 5.500h4v-4L15.500 8l-7 6.500v-4h-4z', notched: 'FM.5 5.500h7v-4L15.500 8l-8 6.500v-4h-7L3 8z',
  penta: 'FM.5 3.500h10l5 4.500-5 5H.5z', chev: 'FM2.500 3.500h6l5 4.500-5 5h-6L7 8z',
  rcall: 'FM.5 1.500h9v5h2v-2l4 3.500-4 3.500v-2h-2v5h-9z', dcall: 'FM.5 1.500h15v8h-5v2h2L8 15.500l-4.500-4h2v-2h-5z', lcall: 'FM15.500 1.500h-9v5h-2v-2L.5 8l4 3.500v-2h2v5h9z', ucall: 'FM.5 14.500h15v-7h-5v-3h2L8 .5l-4.500 4h2v3h-5z',
  lrcall: 'FM4.500 1.500h7v5h1v-2l3 3.500-3 3.500v-2h-1v5h-7v-5h-1v2L.5 8l3-3.500v2h1z', quadcall: 'FM8 .5l3 3H9.500v1h2v2h1V5l3 3-3 3V9.500h-1v2h-2v1H11l-3 3-3-3h1.500v-1h-2v-2h-1V11l-3-3 3-3v1.500h1v-2h2v-1H5z',
  circ: 'FM1.500 10Q1.500 2.500 8 2.500t6 8h1.500l-3.500 3-3.500-3h2.500Q11 5.500 8 5.500T4.500 10z',
  plus: 'FM6.500 1.500h3v5h5v3h-5v5h-3v-5h-5v-3h5z', minus: 'FM1.500 6.500h13v3h-13z', times: 'FM4 2l4 4 4-4 2 2-4 4 4 4-2 2-4-4-4 4-2-2 4-4-4-4z',
  divide: 'FM1.500 7h13v2h-13z|DM7 3h2v2H7zM7 11h2v2H7z', equal: 'FM1.500 3.500h13v3h-13zM1.500 9.500h13v3h-13z', neq: 'FM1.500 3.500h13v3h-13zM1.500 9.500h13v3h-13z|FM11 1l2 1-7 13-2-1z',
  decide: 'FM8 3.500L15.500 8 8 12.500.5 8z', predef: 'FM.5 1.500h15v13H.5z|LM3.500 1.500v13M12.500 1.500v13', intern: 'FM1.500 1.500h13v13h-13z|LM4.500 1.500v13M1.500 4.500h13',
  doc: 'FM.5 2.500h15v10q-4-2-7.500 1t-7.500 0z', mdoc: 'FM4.500 1.500h11v8h-11z|FM2.500 3.500h11v8h-11z|FM.5 5.500h11v7q-3-2-5.500 1t-5.500-1z', term: 'FM4 5.500h8q3.500 0 3.500 2.500T12 10.500H4Q.5 10.500.5 8T4 5.500z',
  prep: 'FM4.500 2.500h7l4 5.500-4 5.500h-7L.5 8z', minput: 'FM.5 6.500l15-4v11H.5z', mop: 'FM.5 2.500h15l-4 12h-7z', conn: 'FM8 3.500a4.500 4.500 0 1 1 0 9a4.500 4.500 0 1 1 0-9z', off: 'FM3.500 3.500h9v6L8 13.500l-4.500-4z',
  card: 'FM5.500 2.500h10v12H.5v-7z', tape: 'FM.5 3.500q4 3 7.500 0t7.500 0v10q-4-2-7.500 0t-7.500 0z', sum: 'FM8 .5a7.500 7.500 0 1 1 0 15a7.500 7.500 0 1 1 0-15z|LM3 3l10 10M13 3L3 13', or: 'FM8 .5a7.500 7.500 0 1 1 0 15a7.500 7.500 0 1 1 0-15z|LM8 .5v15M.5 8h15',
  coll: 'FM4.500 1.500h7l-7 13h7z', sort: 'FM8 1.500l3.500 6.500L8 14.500 4.500 8z|LM4.500 8h7', ext: 'FM8 1.500l6.500 12h-13z', merge: 'FM8 14.500l6.500-12h-13z', stored: 'FM4 2.500h11.500q-4 5 0 11H4Q.5 12 .5 8T4 2.500z', delay: 'FM1.500 1.500h6q7 1 7 6.500t-7 6.500h-6z',
  seq: 'FM8 .5a7 7 0 0 1 4.500 13h3v2H8a7.500 7.500 0 1 1 0-15z', direct: 'FM3 1.500h10q2.500 2 2.500 6.500T13 14.500H3Q.5 12 .5 8T3 1.500z|LM11 1.500q-2 6 0 13', disp: 'FM5 1.500h7q3.500 2 3.500 6.500T12 14.500H5L.5 8z',
  rib1: 'FM.5 4.500h4v-2h7v2h4l-2 4 2 4h-5v-2h-5v2h-5l2-4z', rib2: 'FM.5 3.500h6v2h3v-2h6l-2 4 2 4h-4v2h-7v-2h-4l2-4z', rib3: 'FM1.500 5Q4 1.500 8 1.500T14.500 5v9l-3-2v-2h-7v2l-3 2z', rib4: 'FM1.500 3.500l3 1v2h7v-2l3-1v8q-2 3-6.500 3t-6.500-3z',
  vscroll: 'FM4.500 12V3q0-2.500 3-2.500h8v3h-3v9q0 3-3 3h-9v-3z', hscroll: 'FM1.500 4.500h12v-2l2-1v9l-2 2h-10v2l-3-1v-9z', wave: 'FM.5 4.500q4-5 7.500 0t7.500 0v8q-4 4-7.500 0t-7.500 0z', dwave: 'FM.5 3q3-3 4 1t3.500 0q2-4 4 0t3.500 0v10q-3 2-4-1t-3.500 0q-2 4-4 0t-3.500 0z',
  crect: 'FM.5 2.500h15v11h-9l-3 2v-2h-3z', crr: 'FM2.500 2.500h11l2 2v7l-2 2h-11l-2-2v-7z', coval: 'FM8 1.500a7 6 0 1 1 0 12a7 6 0 1 1 0-12z',
  call: 'FM5.500 3.500h10v8h-10z|LM5.500 7h-3v6h-2', calld: 'FM6 3.500h9v8H6z|LM6 3v10M6 9H1.500v4'
};
// Star outlines with n tips; larger counts carry their number.
function star(n, inner, label) {
  let d = '';
  for (let i = 0; i < 2 * n; i++) {
    const r = i % 2 ? inner : 7.8, a = Math.PI * i / n - Math.PI / 2;
    d += (i ? 'L' : 'M') + (8 + r * Math.cos(a)).toFixed(1) + ' ' + (8 + r * Math.sin(a)).toFixed(1);
  }
  return 'F' + d + 'z' + (label ? '|T' + label : '');
}
Object.assign(G, {
  ex1: star(11, 4), ex2: star(13, 5), s4: star(4, 2), s5: star(5, 3.2), s6: star(6, 5), s7: star(7, 5.5),
  s8: star(8, 6.2, 8), s10: star(10, 6.5, 10), s12: star(12, 6.3, 12), s16: star(16, 6.3, 16), s24: star(18, 6.3, 24), s32: star(20, 6.3, 32)
});
function draw(name) {
  const parts = G[name].split('|').map(p => {
    const k = p[0], v = p.slice(1);
    if (k === 'T') return `<text class="tn" x="8" y="11">${v}</text>`;
    if (k === 'A') { const [x, y] = v.split(','); return `<text class="ta" x="${x}" y="${y}">A</text>`; }
    return `<path class="${k.toLowerCase()}" d="${v}"/>`;
  });
  return `<svg width="16" height="16" viewBox="0 0 16 16">${parts.join('')}</svg>`;
}
const cells = list => list.split(' ').map(n => `<button class="cell" aria-label="${n}">${draw(n)}</button>`).join('');
document.querySelectorAll('[data-list]').forEach(e => { e.innerHTML = cells(e.dataset.list); });

const sections = [
  ['最近使用的形状', 'hex rrect textbox vtext line arrow rect oval rrect2 tri elbow elbowA rArr dArr freeform scribble arc curve'],
  ['线条', 'line arrow darrow elbow elbowA elbowD curved curvedA curvedD curve freeform scribble'],
  ['矩形', 'rect rrect2 snip1 snip2 snipd snipr round1 round2 roundd'],
  ['基本形状', 'textbox vtext oval tri rtri para trap diamond pentagon hex n7 n8 n10 n12 pie chord tear frame half lshape stripe cross plaque can cube bevel donut no blocka fold smile heart bolt sun moon cloud arc bracketp bracep lbk rbk lbc rbc'],
  ['箭头总汇', 'rArr lArr uArr dArr lr ud quad lru bent uturn leftup bentup cr cl cu cd striped notched penta chev rcall dcall lcall ucall lrcall quadcall circ'],
  ['公式形状', 'plus minus times divide equal neq'],
  ['流程图', 'rect rrect decide para predef intern doc mdoc term prep minput mop conn off card tape sum or coll sort ext merge stored delay seq can direct disp'],
  ['星与旗帜', 'ex1 ex2 s4 s5 s6 s7 s8 s10 s12 s16 s24 s32 rib1 rib2 rib3 rib4 vscroll hscroll wave dwave'],
  ['标注', 'crect crr coval cloud call call call calld calld calld calld calld']
];
document.getElementById('menu').innerHTML = sections.map(([t, l]) => `<h2>${t}</h2><div class="shapes">${cells(l)}</div>`).join('');

// Paragraph buttons: [drawing, has drop-down caret]
const lines = (a) => a.map(([x, y, w]) => `M${x} ${y}.5h${w}`).join('');
const P = {
  bullets: ['<path class="k" d="M7 2.500h9M7 7.500h9M7 12.500h9"/><path fill="#3560b0" d="M1 1h3v3H1zM1 6h3v3H1zM1 11h3v3H1z"/>', 1],
  numbers: ['<path class="k" d="M6 2.500h10M6 7.500h10M6 12.500h10"/><text class="tb" x="1" y="5">1</text><text class="tb" x="1" y="10">2</text><text class="tb" x="1" y="15">3</text>', 1],
  outdent: ['<path stroke="#7387a8" fill="none" d="M4 1.500h10M8 4.500h8M8 7.500h8M8 10.500h6M4 13.500h10M7.500 0v15M0 7.500h6M3 5L.5 7.500 3 10"/>'],
  indent: ['<path stroke="#7387a8" fill="none" d="M4 1.500h10M8 4.500h8M8 7.500h8M8 10.500h6M4 13.500h10M7.500 0v15M0 7.500h6M3 5l2.500 2.500L3 10"/>'],
  spacing: ['<path class="k" d="M8 3.500h8M8 6.500h7M8 9.500h8M8 12.500h7"/><path fill="#2f63c0" d="M3.500 0L7 4H4.500v2h-2V4H0zM3.500 16L7 12H4.500v-2h-2v2H0z"/>', 1],
  aleft: [`<path class="k" d="${lines([[1, 2, 14], [1, 4, 9], [1, 6, 14], [1, 8, 9], [1, 10, 14], [1, 12, 9]])}"/>`],
  acenter: [`<path class="k" d="${lines([[1, 2, 14], [4, 4, 8], [1, 6, 14], [4, 8, 8], [1, 10, 14], [4, 12, 8]])}"/>`],
  aright: [`<path class="k" d="${lines([[1, 2, 14], [6, 4, 9], [1, 6, 14], [6, 8, 9], [1, 10, 14], [6, 12, 9]])}"/>`],
  ajust: [`<path class="k" d="${lines([2, 4, 6, 8, 10, 12].map(y => [1, y, 14]))}"/>`],
  adist: [`<path class="k" d="M.5 0v15M15.500 0v15${lines([6, 8, 10, 12, 14].map(y => [2, y, 12]))}"/><path stroke="#2f63c0" fill="none" d="M2 2.500h12M4 .5l-2 2 2 2M12 .5l2 2-2 2"/>`],
  columns: [`<path class="k" d="${lines([2, 4, 6, 8, 10, 12].flatMap(y => [[1, y, 6], [9, y, 6]]))}"/>`, 1]
};
document.querySelectorAll('[data-icon]').forEach(b => {
  const [art, caret] = P[b.dataset.icon];
  b.innerHTML = `<svg width="16" height="16" viewBox="0 0 16 16">${art}</svg>` + (caret ? '<span class="caret"></span>' : '');
});

// Selection frame: four corners, the index of the edge that carries the
// rotation handle, and the handle's centre.
function frame(pts, edge, gx, gy) {
  const mids = pts.map((p, i) => { const q = pts[(i + 1) % 4]; return [(p[0] + q[0]) / 2, (p[1] + q[1]) / 2]; });
  const ang = Math.atan2(pts[1][1] - pts[0][1], pts[1][0] - pts[0][0]) * 180 / Math.PI;
  const m = mids[edge];
  return `<path class="guide" d="M${pts.map(p => p.map(v => v + .5).join(' ')).join('L')}zM${m[0] + .5} ${m[1] + .5}L${gx + .5} ${gy + .5}"/>` +
    mids.map(([x, y]) => `<rect class="mid" x="${x - 3.5}" y="${y - 3.5}" width="7" height="7" transform="rotate(${ang} ${x} ${y})"/>`).join('') +
    pts.map(([x, y]) => `<circle class="knob" cx="${x + .5}" cy="${y}" r="4.500"/>`).join('') +
    `<circle class="green" cx="${gx + .5}" cy="${gy}" r="4.500"/>`;
}
document.getElementById('stage').innerHTML = '<g transform="translate(-43 -159)">' +
  '<rect class="outline" x="328.500" y="290.500" width="182" height="181" rx="31"/>' +
  '<path class="outline" d="M714 250.500H850Q867 250.500 873 264L933 387 873 508Q866 523 850 523H714Q699 523 691 508L638 402Q633 387 638 374L694 264Q700 250.500 714 250.500z"/>' +
  '<path class="outline" d="M1080 244.500H1222Q1234 244.500 1238 253L1297 373Q1301 381 1297 390L1240 508Q1235 517 1222 517H1080Q1068 517 1062 508L1005 391Q1001 381 1005 372L1064 253Q1069 244.500 1080 244.500z"/>' +
  frame([[630, 250], [934, 250], [934, 523], [630, 523]], 0, 782, 225) +
  frame([[703, 226], [748, 256], [715, 305], [670, 274]], 3, 667, 236) +
  frame([[827, 238], [886, 238], [886, 292], [827, 292]], 0, 856, 213) +
  frame([[634, 362], [667, 360], [669, 412], [637, 414]], 3, 611, 389) +
  frame([[629, 365], [662, 363], [664, 411], [631, 412]], 3, 606, 390) +
  frame([[880, 374], [928, 350], [955, 402], [907, 427]], 1, 963, 365) +
  frame([[680, 481], [739, 481], [739, 535], [680, 535]], 2, 709, 559) +
  frame([[842, 471], [893, 486], [877, 542], [825, 527]], 1, 909, 521) + '</g>';
```
